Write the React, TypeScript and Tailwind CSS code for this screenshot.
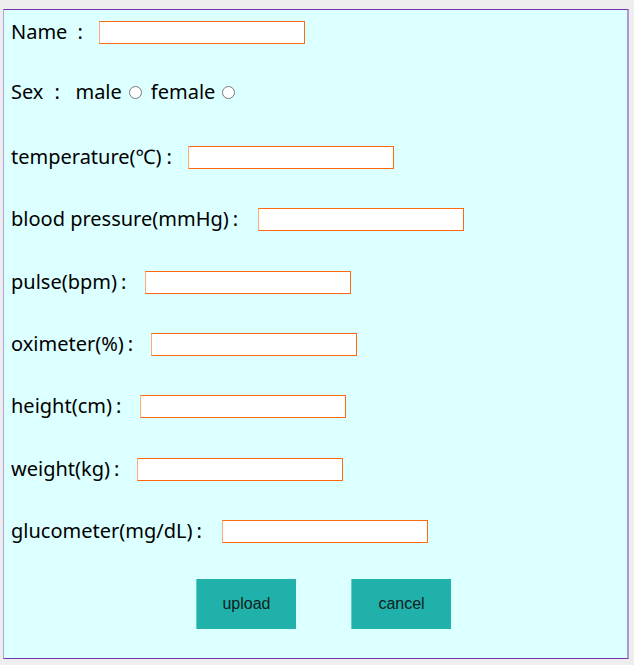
import React from "react";

const font = { fontFamily: '"Noto Sans", "Noto Sans CJK TC", sans-serif' };

function Colon({ pl }: { pl: string }) {
  return <span className={`inline-block w-[20px] shrink-0 ${pl}`}>:</span>;
}

function Field({ label, mt, gap, pl = "pl-[4px]" }: { label: string; mt: string; gap: string; pl?: string }) {
  return (
    <div className={`flex h-[28px] items-center ${mt}`}>
      <span className="flex whitespace-pre text-[20px] leading-none text-black">
        {label}
        <Colon pl={pl} />
      </span>
      <input
        type="text"
        className={`h-[23px] w-[206px] border border-[#ff6a10] border-l-[#ffab78] bg-white outline-none ${gap}`}
      />
    </div>
  );
}

function Radio() {
  return (
    <input
      type="radio"
      name="sex"
      className="h-[13px] w-[13px] appearance-none rounded-full border border-[#7a7a7a] bg-white"
    />
  );
}

export default function App() {
  return (
    <div className="min-h-[665px] w-[634px] bg-[#eeeeee] pt-[9px] pl-[3px]" style={font}>
      <div className="flex h-[650px] w-[626px] flex-col border-y border-l border-r-2 border-y-[#7634b0] border-l-[#b3a3d6] border-r-[#ab96d6] bg-[#dcffff] pl-[7px] pt-[8px]">
        <Field label="Name" mt="mt-0" gap="ml-[12px]" pl="pl-[10px]" />
        <div className="mt-[32px] flex h-[28px] items-center text-[20px] leading-none text-black">
          <span className="flex whitespace-pre">
            Sex
            <Colon pl="pl-[11px]" />
          </span>
          <span className="ml-[12px]">male</span>
          <span className="ml-[7px] flex items-center"><Radio /></span>
          <span className="ml-[9px]">female</span>
          <span className="ml-[7px] flex items-center"><Radio /></span>
        </div>
        <Field label="temperature(℃)" mt="mt-[37px]" gap="ml-[7px]" pl="pl-[5px]" />
        <Field label="blood pressure(mmHg)" mt="mt-[34px]" gap="ml-[9px]" />
        <Field label="pulse(bpm)" mt="mt-[35px]" gap="ml-[8px]" />
        <Field label="oximeter(%)" mt="mt-[34px]" gap="ml-[7px]" />
        <Field label="height(cm)" mt="mt-[34px]" gap="ml-[8px]" />
        <Field label="weight(kg)" mt="mt-[35px]" gap="ml-[7px]" />
        <Field label="glucometer(mg/dL)" mt="mt-[34px]" gap="ml-[10px]" />
        <div
          className="mt-[34px] flex gap-[55px] pl-[185px]"
          style={{ fontFamily: '"Liberation Sans", Arial, sans-serif' }}
        >
          <button className="h-[50px] w-[100px] border-l border-l-[#5fcfc8] bg-[#20b2aa] text-[16px] text-[#102020]">
            upload
          </button>
          <button className="h-[50px] w-[100px] border-l border-l-[#5fcfc8] bg-[#20b2aa] text-[16px] text-[#102020]">
            cancel
          </button>
        </div>
      </div>
    </div>
  );
}
